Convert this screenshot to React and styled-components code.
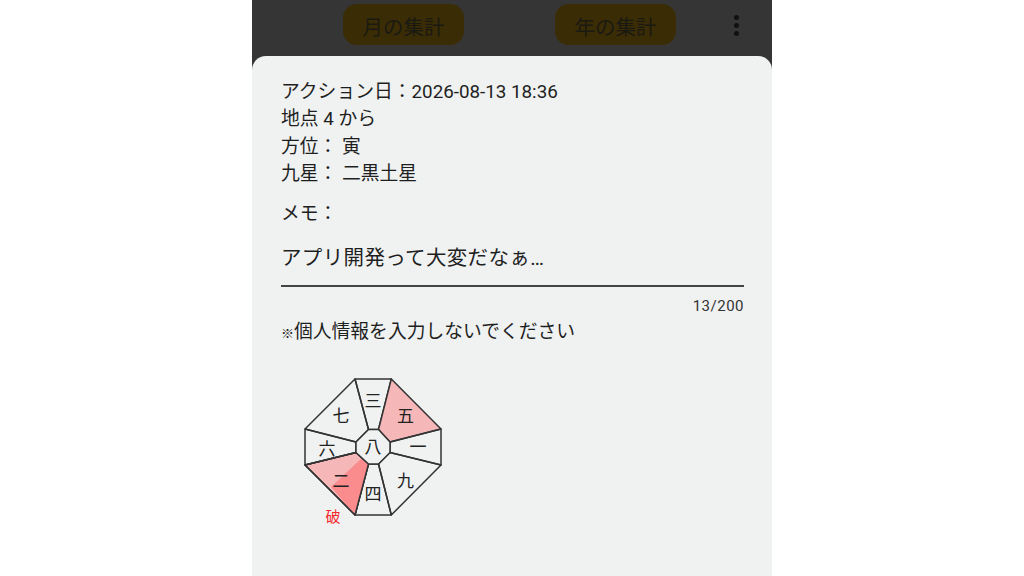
import styled, { createGlobalStyle } from "styled-components";

const GlobalStyle = createGlobalStyle`
  html, body {
    margin: 0;
    height: 100%;
    background: #ffffff;
  }
  #root {
    height: 100%;
  }
`;

const FONT = `Roboto, "Noto Sans CJK JP", sans-serif`;

const Page = styled.div`
  display: flex;
  justify-content: center;
  height: 576px;
  overflow: hidden;
  font-family: ${FONT};
  color: #1f1f1f;
`;

const Phone = styled.div`
  display: flex;
  flex-direction: column;
  width: 520px;
  height: 100%;
  background: #353535;
`;

const TopBar = styled.div`
  display: flex;
  align-items: flex-start;
  flex: 0 0 56px;
  padding-top: 4px;
  box-sizing: border-box;
`;

const SummaryButton = styled.div`
  display: flex;
  align-items: center;
  justify-content: center;
  width: 121px;
  height: 41px;
  padding-top: 2px;
  box-sizing: border-box;
  margin-left: ${(p) => p.$left}px;
  border-radius: 14px;
  background: #3a2c05;
  color: #1a1a12;
  font-size: 20.5px;
`;

const MoreButton = styled.div`
  display: flex;
  flex-direction: column;
  gap: 3px;
  margin: 11px 0 0 58px;
`;

const Dot = styled.span`
  width: 5px;
  height: 5px;
  border-radius: 50%;
  background: #111111;
`;

const Sheet = styled.div`
  flex: 1;
  padding: 23px 28px 0 29px;
  background: #f0f2f2;
  border-radius: 14px 14px 0 0;
`;

const InfoLine = styled.div`
  height: 27.4px;
  line-height: 27.4px;
  font-size: 18.8px;
`;

const MemoLabel = styled(InfoLine)`
  margin-top: 12px;
`;

const MemoText = styled.div`
  margin-top: 15px;
  padding-bottom: 12px;
  border-bottom: 2px solid #444444;
  line-height: 30px;
  font-size: 20.5px;
  letter-spacing: 0.35px;
`;

const Counter = styled.div`
  margin-top: 9px;
  line-height: 20px;
  text-align: right;
  font-size: 15px;
  letter-spacing: 0.5px;
  color: #333333;
`;

const Notice = styled.div`
  margin-top: 3px;
  line-height: 26px;
  font-size: 18.8px;
`;

const NoticeMark = styled.span`
  display: inline-block;
  width: 13px;
  font-size: 13px;
  font-weight: 700;
`;

const ChartBox = styled.svg`
  display: block;
  width: 170px;
  height: 170px;
  margin: 18px 0 0 9px;
`;

const Sector = styled.polygon`
  fill: ${(p) => p.$fill || "none"};
  stroke: #333333;
  stroke-width: 1.5;
  stroke-linejoin: round;
`;

const Glyph = styled.text`
  font-family: ${FONT};
  font-size: 17px;
  fill: #222222;
  text-anchor: middle;
  dominant-baseline: central;
`;

const BreakMark = styled(Glyph)`
  font-size: 15px;
  fill: #f5282d;
`;

// outer and inner octagon corners, clockwise from top-left of the top sector
const OUTER = [[65, 14], [101.3, 14], [151, 64], [151, 100], [101.3, 150], [65, 150], [15, 100], [15, 64]];
const INNER = [[78.5, 64.5], [88.5, 64.5], [100, 77], [100, 87.5], [88.5, 99], [78.5, 99], [66, 87.5], [66, 77]];

const LABELS = [
  { text: "三", x: 83, y: 36 },
  { text: "五", x: 115.5, y: 50.5 },
  { text: "一", x: 128, y: 82 },
  { text: "九", x: 115.5, y: 115.5 },
  { text: "四", x: 83, y: 128.5 },
  { text: "二", x: 51, y: 116 },
  { text: "六", x: 37, y: 84 },
  { text: "七", x: 51, y: 51 },
];

const FILLS = { 1: "#f6b7b9", 5: "#f6b7b9" };

function toPoints(list) {
  return list.map((p) => p.join(",")).join(" ");
}

function DirectionChart() {
  return (
    <ChartBox viewBox="0 0 170 170">
      {OUTER.map((corner, i) => {
        const next = (i + 1) % 8;
        return (
          <Sector
            key={i}
            $fill={FILLS[i]}
            points={toPoints([corner, OUTER[next], INNER[next], INNER[i]])}
          />
        );
      })}
      <polygon points="74,91 41,122 65,150 78.5,99" fill="#fa8c8e" />
      <Sector points={toPoints([OUTER[5], OUTER[6], INNER[6], INNER[5]])} />
      <Sector points={toPoints(INNER)} $fill="#f0f2f2" />
      {LABELS.map((l) => (
        <Glyph key={l.text} x={l.x} y={l.y}>
          {l.text}
        </Glyph>
      ))}
      <Glyph x={83} y={82}>
        八
      </Glyph>
      <BreakMark x={43} y={152}>
        破
      </BreakMark>
    </ChartBox>
  );
}

export default function App() {
  return (
    <>
      <GlobalStyle />
      <Page>
        <Phone>
          <TopBar>
            <SummaryButton $left={91}>月の集計</SummaryButton>
            <SummaryButton $left={91}>年の集計</SummaryButton>
            <MoreButton>
              <Dot />
              <Dot />
              <Dot />
            </MoreButton>
          </TopBar>
          <Sheet>
            <InfoLine>アクション日：2026-08-13 18:36</InfoLine>
            <InfoLine>地点 4 から</InfoLine>
            <InfoLine>方位： 寅</InfoLine>
            <InfoLine>九星： 二黒土星</InfoLine>
            <MemoLabel>メモ：</MemoLabel>
            <MemoText>アプリ開発って大変だなぁ…</MemoText>
            <Counter>13/200</Counter>
            <Notice>
              <NoticeMark>※</NoticeMark>個人情報を入力しないでください
            </Notice>
            <DirectionChart />
          </Sheet>
        </Phone>
      </Page>
    </>
  );
}
